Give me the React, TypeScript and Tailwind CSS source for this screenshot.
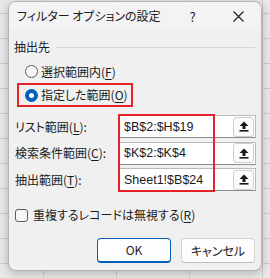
import React from 'react';

const font = "font-['Noto_Sans_CJK_JP','Noto_Sans',sans-serif] [font-feature-settings:'palt']";

function Ul({ c }: { c: string }) {
  return <span className="underline underline-offset-2 decoration-1">{c}</span>;
}

function Radio({ checked }: { checked?: boolean }) {
  if (checked) {
    return (
      <span className="w-[13px] h-[13px] rounded-full bg-[#005fb8] flex items-center justify-center shrink-0">
        <span className="w-[5px] h-[5px] rounded-full bg-white" />
      </span>
    );
  }
  return <span className="w-[13px] h-[13px] rounded-full border border-[#5d5d5d] bg-[#f7f7f7] shrink-0" />;
}

function PickButton() {
  return (
    <div className="w-[21px] h-[20px] rounded-[3px] border border-[#cfcfcf] bg-[#fbfbfb] flex items-center justify-center">
      <svg width="10" height="11" viewBox="0 0 10 11">
        <polygon points="5,0.5 9.5,5 0.5,5" fill="#1a1a1a" />
        <rect x="3.5" y="4.5" width="3" height="3.5" fill="#1a1a1a" />
        <rect x="0.5" y="9" width="9" height="1.6" fill="#1a1a1a" />
      </svg>
    </div>
  );
}

function Field({ value }: { value: string }) {
  return (
    <div className="h-[23px] bg-white border border-[#b9b9b9] border-b-[#8a8a8a] flex items-center pl-[5px] pr-[1px]">
      <span className="flex-1 font-['Liberation_Sans',sans-serif] text-[12.5px] text-[#1a1a1a] pt-[1px]">{value}</span>
      <PickButton />
    </div>
  );
}

export default function App() {
  const rows = [
    { label: 'リスト範囲(', key: 'L', value: '$B$2:$H$19' },
    { label: '検索条件範囲(', key: 'C', value: '$K$2:$K$4' },
    { label: '抽出範囲(', key: 'T', value: 'Sheet1!$B$24' },
  ];

  return (
    <div className={`w-[270px] h-[278px] overflow-hidden bg-[#e9e9e9] bg-[linear-gradient(to_right,#cdcdcd_1px,transparent_1px),linear-gradient(to_bottom,#cdcdcd_1px,transparent_1px)] bg-[size:73px_25px] bg-[position:43px_13px] pt-[1px] pl-[8px] ${font}`}>
      <div className="w-[254px] h-[270px] rounded-[8px] border border-[#b4b4b4] bg-[#f0f0f0] shadow-[0_2px_10px_rgba(0,0,0,0.25)] overflow-hidden flex flex-col text-[#1b1b1b]">
        {/* title bar */}
        <div className="h-[25px] bg-[#f3f3f3] flex items-center shrink-0">
          <span className="w-[161px] shrink-0 pl-[8px] text-[12px] leading-none pt-[3px] whitespace-nowrap">フィルター オプションの設定</span>
          <span className="w-[45px] shrink-0 text-center text-[13px] leading-none pt-[3px]">?</span>
          <span className="w-[46px] shrink-0 flex justify-center pt-[3px]">
            <svg width="11" height="11" viewBox="0 0 11 11">
              <path d="M0.5 0.5 L10.5 10.5 M10.5 0.5 L0.5 10.5" stroke="#1b1b1b" strokeWidth="1.1" />
            </svg>
          </span>
        </div>

        <div className="flex flex-col px-[5px] text-[12px]">
          {/* group header */}
          <div className="flex items-center h-[16px] mt-[12px]">
            <span className="leading-none">抽出先</span>
            <span className="flex-1 h-px bg-[#d6d6d6] ml-[6px] mr-[1px]" />
          </div>

          {/* radios */}
          <div className="flex flex-col items-start mt-[5px] pl-[3px]">
            <div className="h-[23px] flex items-center gap-[3px] border-2 border-transparent pl-[6px] pr-[3px]">
              <Radio />
              <span className="leading-none">選択範囲内(<Ul c="F" />)</span>
            </div>
            <div className="h-[24px] flex items-center gap-[3px] border-2 border-[#e5222a] pl-[6px] pr-[3px]">
              <Radio checked />
              <span className="leading-none">指定した範囲(<Ul c="O" />)</span>
            </div>
          </div>

          {/* ranges */}
          <div className="flex mt-[8px]">
            <div className="w-[104px] flex flex-col">
              {rows.map((r, i) => (
                <div key={r.key} className={`h-[23px] flex items-center ${i > 0 ? 'mt-[3.5px]' : ''}`}>
                  <span className="leading-none pl-[1px]">
                    {r.label}
                    <Ul c={r.key} />):
                  </span>
                </div>
              ))}
            </div>
            <div className="relative flex-1 flex flex-col gap-[3.5px]">
              {rows.map((r) => (
                <Field key={r.key} value={r.value} />
              ))}
              <div className="absolute left-0 top-[-1px] bottom-[-1px] w-[97px] border-2 border-[#e5222a] pointer-events-none" />
            </div>
          </div>

          {/* checkbox */}
          <div className="flex items-center gap-[5px] mt-[16px] h-[16px] pl-[1px]">
            <span className="w-[13px] h-[13px] rounded-[3px] border border-[#5d5d5d] bg-[#f7f7f7] shrink-0" />
            <span className="leading-none">重複するレコードは無視する(<Ul c="R" />)</span>
          </div>

          {/* buttons */}
          <div className="flex justify-end gap-[10px] mt-[15px] pr-[1px]">
            <button className="w-[74px] h-[25px] rounded-[4px] border border-[#005fb8] border-b-2 bg-[#fdfdfd] text-[12px] leading-none">
              OK
            </button>
            <button className="w-[74px] h-[25px] rounded-[4px] border border-[#d2d2d2] border-b-[#bdbdbd] bg-[#fdfdfd] text-[12px] leading-none">
              キャンセル
            </button>
          </div>
        </div>
      </div>
    </div>
  );
}
